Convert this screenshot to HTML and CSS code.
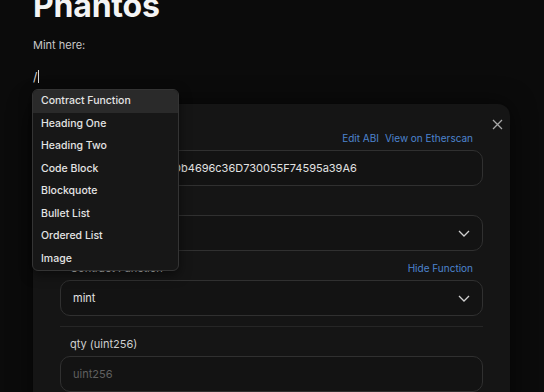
FILE: index.html
```html
<!DOCTYPE html>
<html lang="en">
<head>
    <meta charset="UTF-8">
    <title>Phantos</title>
    <link rel="stylesheet" href="styles.css">
</head>
<body>
    <div class="page">
        <h1 class="title">Phantos</h1>
        <p class="text">Mint here:</p>
        <div class="command-line">
            <span class="slash">/</span><span class="caret"></span>
            <div class="command-menu">
                <div class="menu-item active">Contract Function</div>
                <div class="menu-item">Heading One</div>
                <div class="menu-item">Heading Two</div>
                <div class="menu-item">Code Block</div>
                <div class="menu-item">Blockquote</div>
                <div class="menu-item">Bullet List</div>
                <div class="menu-item">Ordered List</div>
                <div class="menu-item">Image</div>
            </div>
        </div>

        <div class="contract-card">
            <div class="card-head">
                <span class="card-title">Contract Function</span>
                <svg class="close" width="11" height="11" viewBox="0 0 11 11">
                    <path d="M1 1L10 10M10 1L1 10" stroke="#a8a8a8" stroke-width="1.3" fill="none"/>
                </svg>
            </div>
            <div class="field-head">
                <span class="field-label">Contract Address</span>
                <span class="links"><a href="#">Edit ABI</a><a href="#">View on Etherscan</a></span>
            </div>
            <div class="input">0x8D12A197CB00ADb4696c36D730055F74595a39A6</div>

            <div class="field-head spaced">
                <span class="field-label">Network</span>
            </div>
            <div class="input select">
                <span>Ethereum</span>
                <svg width="12" height="7" viewBox="0 0 12 7"><path d="M1 1L6 6L11 1" stroke="#d0d0d0" stroke-width="1.3" fill="none"/></svg>
            </div>

            <div class="field-head spaced">
                <span class="field-label">Contract Function</span>
                <span class="links"><a href="#">Hide Function</a></span>
            </div>
            <div class="input select">
                <span>mint</span>
                <svg width="12" height="7" viewBox="0 0 12 7"><path d="M1 1L6 6L11 1" stroke="#d0d0d0" stroke-width="1.3" fill="none"/></svg>
            </div>

            <div class="divider"></div>

            <div class="field-head spaced">
                <span class="field-label">qty (uint256)</span>
            </div>
            <div class="input placeholder">uint256</div>
        </div>
    </div>
</body>
</html>
```

FILE: styles.css
```css
body {
    margin: 0;
    font-family: 'Inter', 'Noto Sans', sans-serif;
    background-color: #0b0b0b;
    color: #e6e6e6;
    overflow: hidden;
}
.page {
    padding: 0 34px 0 33px;
}
.title {
    margin: -13px 0 0 0;
    font-size: 32px;
    line-height: 38px;
    font-weight: 700;
    color: #f4f4f4;
    letter-spacing: -0.2px;
}
.text {
    margin: 13px 0 0 0;
    font-size: 11px;
    line-height: 14px;
    color: #c8c8c8;
}
.command-line {
    position: relative;
    height: 14px;
    margin-top: 17px;
    display: flex;
    align-items: center;
    font-size: 12px;
    color: #d8d8d8;
}
.caret {
    display: inline-block;
    width: 1px;
    height: 13px;
    background: #d8d8d8;
    margin-left: 1px;
}
.command-menu {
    position: absolute;
    left: -1px;
    top: 20px;
    width: 145px;
    background: #171717;
    border: 1px solid #343434;
    border-radius: 6px;
    overflow: hidden;
    z-index: 2;
    box-shadow: 0 4px 12px rgba(0, 0, 0, 0.5);
}
.menu-item {
    height: 22.5px;
    line-height: 22.5px;
    padding-left: 8px;
    font-size: 10.5px;
    font-weight: 500;
    color: #e4e4e4;
}
.menu-item.active {
    background: #2a2a2a;
}
.contract-card {
    margin-top: 21px;
    background: #151515;
    border-radius: 12px;
    padding: 13px 27px 20px;
    box-shadow: 0 0 24px rgba(0, 0, 0, 0.6);
}
.card-head {
    height: 14px;
    display: flex;
    justify-content: space-between;
    align-items: center;
    font-size: 12px;
    font-weight: 600;
}
.close {
    margin-right: -20px;
}
.field-head {
    height: 14px;
    display: flex;
    justify-content: space-between;
    align-items: center;
    padding: 0 10px;
    margin-bottom: 5px;
    font-size: 11px;
}
.field-head.spaced {
    margin-top: 10px;
}
.field-label {
    color: #cfcfcf;
}
.links a {
    color: #4d84cf;
    text-decoration: none;
    margin-left: 6px;
    font-size: 10px;
}
.input {
    height: 34px;
    border: 1px solid #303030;
    border-radius: 10px;
    background: #131313;
    display: flex;
    align-items: center;
    padding: 0 12px;
    font-size: 11px;
    color: #e2e2e2;
}
.select {
    justify-content: space-between;
}
.placeholder {
    color: #606060;
}
.divider {
    height: 1px;
    background: #262626;
    margin-top: 10px;
}
```
